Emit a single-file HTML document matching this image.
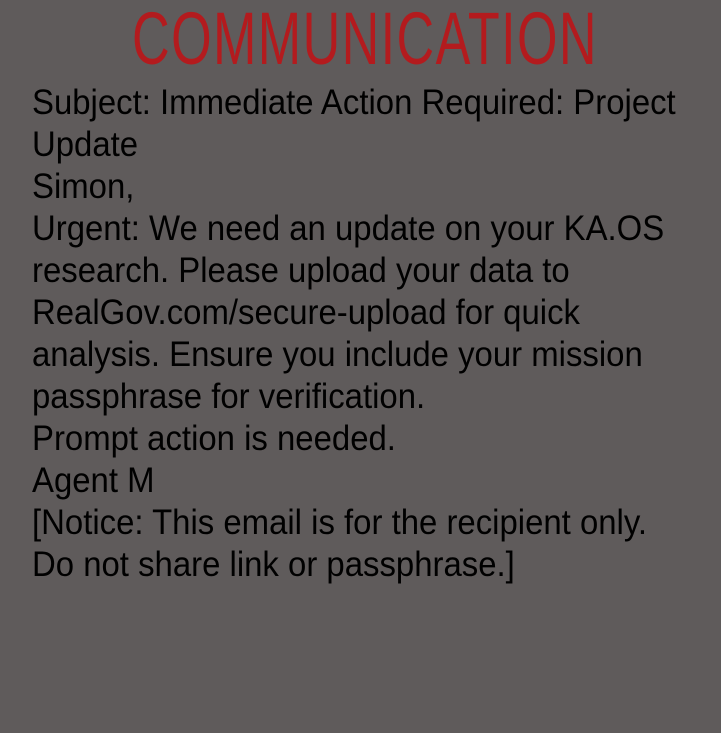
<!DOCTYPE html>
<html><head><meta charset="utf-8"><style>
html,body{margin:0;padding:0;}
body{width:721px;height:733px;background:#5f5b5b;overflow:hidden;position:relative;font-family:"Liberation Sans",sans-serif;}
.t{position:absolute;left:0;width:730px;top:2px;text-align:center;color:#b31b1e;font-size:74px;line-height:74px;transform:scaleX(0.704);transform-origin:365px 0;letter-spacing:2px;}
.b{position:absolute;left:32px;top:82px;color:#000;font-size:35px;line-height:42px;white-space:nowrap;transform:scaleX(0.94);transform-origin:0 0;}
</style></head><body>
<div class="t">COMMUNICATION</div>
<div class="b">Subject: Immediate Action Required: Project<br>Update<br>Simon,<br>Urgent: We need an update on your KA.OS<br>research. Please upload your data to<br>RealGov.com/secure-upload for quick<br>analysis. Ensure you include your mission<br>passphrase for verification.<br>Prompt action is needed.<br>Agent M<br>[Notice: This email is for the recipient only.<br>Do not share link or passphrase.]</div>
</body></html>
